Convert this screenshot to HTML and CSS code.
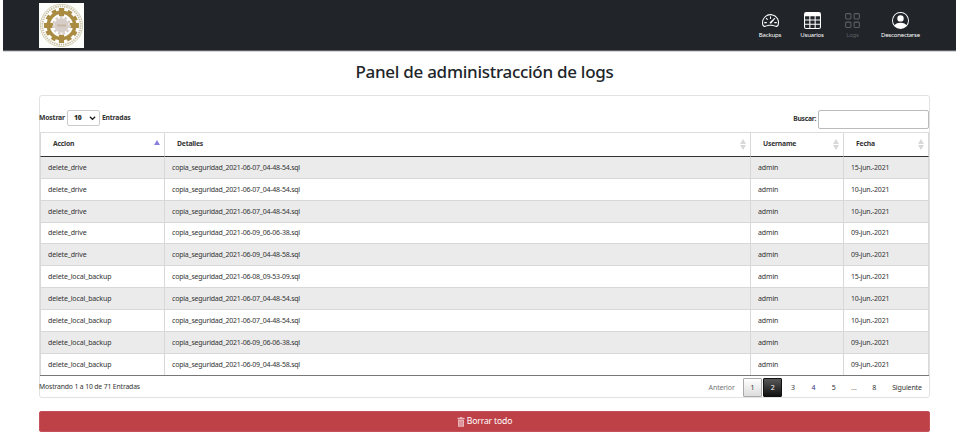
FILE: index.html
```html
<!DOCTYPE html>
<html lang="es">
<head>
<meta charset="utf-8">
<title>Panel de administracción de logs</title>
<link rel="stylesheet" href="styles.css">
</head>
<body>
<header class="navbar">
  <svg class="logo" viewBox="0 0 44 44">
    <rect width="44" height="44" fill="#fdfdfc"/>
    <circle cx="22" cy="22" r="20.6" fill="none" stroke="#c9c2a0" stroke-width=".8"/>
    <circle cx="22" cy="22" r="18.7" fill="none" stroke="#c6bea0" stroke-width="1.800" stroke-dasharray="1.3 .9"/>
    <circle cx="22" cy="22" r="14.8" fill="none" stroke="#a98c42" stroke-width="4" stroke-dasharray="4.2 3.55" stroke-dashoffset="2.1"/>
    <circle cx="22" cy="22" r="12.900" fill="none" stroke="#a98c42" stroke-width="3.400"/>
    <path d="M5 19.500h9v5H5zM30 19.500h9v5h-9zM19.500 5h5v8h-5zM19.500 31h5v8h-5z" fill="#a98c42"/>
    <circle cx="22" cy="22" r="7" fill="#d6cdc8"/>
    <circle cx="22" cy="22" r="8" fill="none" stroke="#d6cdca" stroke-width="2.500" stroke-dasharray="2.500 2"/>
    <path d="M17.500 21h9v2h-9z" fill="#c8b7a4"/>
  </svg>
  <nav class="menu">
    <a class="item backups"><svg viewBox="0 0 16 16"><path d="M8 4a.5.5 0 0 1 .5.5V6a.5.5 0 0 1-1 0V4.500A.5.5 0 0 1 8 4zM3.732 5.732a.5.5 0 0 1 .707 0l.915.914a.5.5 0 1 1-.708.708l-.914-.915a.5.5 0 0 1 0-.707zM2 10a.5.5 0 0 1 .5-.5h1.586a.5.5 0 0 1 0 1H2.500A.5.5 0 0 1 2 10zm9.500 0a.5.5 0 0 1 .5-.5h1.500a.5.5 0 0 1 0 1H12a.5.5 0 0 1-.5-.5zm.754-4.246a.389.389 0 0 0-.527-.02L7.547 9.310a.91.91 0 1 0 1.302 1.258l3.434-4.297a.389.389 0 0 0-.029-.518z"/><path fill-rule="evenodd" d="M0 10a8 8 0 1 1 15.547 2.661c-.442 1.253-1.845 1.602-2.932 1.250C11.309 13.488 9.475 13 8 13c-1.474 0-3.310.488-4.615.911-1.087.352-2.490.003-2.932-1.250A7.988 7.988 0 0 1 0 10zm8-7a7 7 0 0 0-6.603 9.329c.203.575.923.876 1.680.630C4.397 12.533 6.358 12 8 12s3.604.532 4.923.960c.757.245 1.477-.056 1.680-.631A7 7 0 0 0 8 3z"/></svg><span>Backups</span></a>
    <a class="item users"><svg viewBox="0 0 16 16"><path d="M0 2a2 2 0 0 1 2-2h12a2 2 0 0 1 2 2v12a2 2 0 0 1-2 2H2a2 2 0 0 1-2-2V2zm15 2h-4v3h4V4zm0 4h-4v3h4V8zm0 4h-4v3h3a1 1 0 0 0 1-1v-2zm-5 3v-3H6v3h4zm-5 0v-3H1v2a1 1 0 0 0 1 1h3zm-4-4h4V8H1v3zm0-4h4V4H1v3zm5-3v3h4V4H6zm4 4H6v3h4V8z"/></svg><span>Usuarios</span></a>
    <a class="item logs"><svg viewBox="0 0 16 16"><path d="M1 2.500A1.500 1.500 0 0 1 2.500 1h3A1.500 1.500 0 0 1 7 2.500v3A1.500 1.500 0 0 1 5.500 7h-3A1.500 1.500 0 0 1 1 5.500v-3zM2.500 2a.5.5 0 0 0-.5.5v3a.5.5 0 0 0 .5.5h3a.5.5 0 0 0 .5-.5v-3a.5.5 0 0 0-.5-.5h-3zm6.500.5A1.500 1.500 0 0 1 10.500 1h3A1.500 1.500 0 0 1 15 2.500v3A1.500 1.500 0 0 1 13.500 7h-3A1.500 1.500 0 0 1 9 5.500v-3zm1.500-.5a.5.5 0 0 0-.5.5v3a.5.5 0 0 0 .5.5h3a.5.5 0 0 0 .5-.5v-3a.5.5 0 0 0-.5-.5h-3zM1 10.500A1.500 1.500 0 0 1 2.500 9h3A1.500 1.500 0 0 1 7 10.500v3A1.500 1.500 0 0 1 5.500 15h-3A1.500 1.500 0 0 1 1 13.500v-3zm1.500-.5a.5.5 0 0 0-.5.5v3a.5.5 0 0 0 .5.5h3a.5.5 0 0 0 .5-.5v-3a.5.5 0 0 0-.5-.5h-3zm6.500.5A1.500 1.500 0 0 1 10.500 9h3a1.500 1.500 0 0 1 1.500 1.500v3a1.500 1.500 0 0 1-1.500 1.500h-3A1.500 1.500 0 0 1 9 13.500v-3zm1.500-.5a.5.5 0 0 0-.5.5v3a.5.5 0 0 0 .5.5h3a.5.5 0 0 0 .5-.5v-3a.5.5 0 0 0-.5-.5h-3z"/></svg><span>Logs</span></a>
    <a class="item logout"><svg viewBox="0 0 16 16"><path d="M11 6a3 3 0 1 1-6 0 3 3 0 0 1 6 0z"/><path fill-rule="evenodd" d="M0 8a8 8 0 1 1 16 0A8 8 0 0 1 0 8zm8-7a7 7 0 0 0-5.468 11.370C3.242 11.226 4.805 10 8 10s4.757 1.225 5.468 2.370A7 7 0 0 0 8 1z"/></svg><span>Desconectarse</span></a>
  </nav>
</header>
<main class="content">
  <h1>Panel de administracción de logs</h1>
  <section class="card">
    <div class="controls">
      <div class="length">Mostrar <span class="select"><b>10</b><svg viewBox="0 0 8 6"><path d="M1 1.500 4 4.500 7 1.500" fill="none" stroke="#222" stroke-width="1.500"/></svg></span> Entradas</div>
      <label class="search">Buscar:<input type="text"></label>
    </div>
    <div class="table">
      <div class="row head"><div>Accion<i class="sort asc"></i></div><div>Detalles<i class="sort"></i></div><div>Username<i class="sort"></i></div><div>Fecha<i class="sort"></i></div></div>
      <div class="row"><div>delete_drive</div><div>copia_seguridad_2021-06-07_04-48-54.sql</div><div>admin</div><div>15-jun.-2021</div></div>
      <div class="row"><div>delete_drive</div><div>copia_seguridad_2021-06-07_04-48-54.sql</div><div>admin</div><div>10-jun.-2021</div></div>
      <div class="row"><div>delete_drive</div><div>copia_seguridad_2021-06-07_04-48-54.sql</div><div>admin</div><div>10-jun.-2021</div></div>
      <div class="row"><div>delete_drive</div><div>copia_seguridad_2021-06-09_06-06-38.sql</div><div>admin</div><div>09-jun.-2021</div></div>
      <div class="row"><div>delete_drive</div><div>copia_seguridad_2021-06-09_04-48-58.sql</div><div>admin</div><div>09-jun.-2021</div></div>
      <div class="row"><div>delete_local_backup</div><div>copia_seguridad_2021-06-08_09-53-09.sql</div><div>admin</div><div>15-jun.-2021</div></div>
      <div class="row"><div>delete_local_backup</div><div>copia_seguridad_2021-06-07_04-48-54.sql</div><div>admin</div><div>10-jun.-2021</div></div>
      <div class="row"><div>delete_local_backup</div><div>copia_seguridad_2021-06-07_04-48-54.sql</div><div>admin</div><div>10-jun.-2021</div></div>
      <div class="row"><div>delete_local_backup</div><div>copia_seguridad_2021-06-09_06-06-38.sql</div><div>admin</div><div>09-jun.-2021</div></div>
      <div class="row"><div>delete_local_backup</div><div>copia_seguridad_2021-06-09_04-48-58.sql</div><div>admin</div><div>09-jun.-2021</div></div>
    </div>
    <footer class="footer">
      <span class="info">Mostrando 1 a 10 de 71 Entradas</span>
      <div class="pages"><a class="word off">Anterior</a><a class="current">1</a><a class="hover">2</a><a>3</a><a class="blue">4</a><a>5</a><a class="off">…</a><a>8</a><a class="word next">Siguiente</a></div>
    </footer>
  </section>
  <button class="delete"><svg viewBox="0 0 8 10"><path d="M3 0h2v.8h2.500v1.400H.5V.8H3zM1 2.800h6V9.800H1z" fill="#e9b6ba"/><path d="M2.700 3.800v5M4 3.800v5M5.300 3.800v5" stroke="#c9626a" stroke-width=".55"/></svg>Borrar todo</button>
</main>
</body>
</html>
```
FILE: styles.css
```css
* { box-sizing: border-box; }
body {
  margin: 0;
  height: 434px;
  overflow: hidden;
  background: #fff;
  color: #333;
  font: 7px/1 "Noto Sans", "Open Sans", sans-serif;
  letter-spacing: -.13px;
}
.navbar {
  height: 51px;
  margin-left: 3px;
  padding: 3px 27px 0 36px;
  display: flex;
  justify-content: space-between;
  background: #212529;
  border-bottom: 1px solid #5c6064;
  box-shadow: 0 1px 0 #d5d6d8;
}
.logo { width: 45px; height: 45px; }
.menu { display: flex; padding-top: 9px; }
.item {
  display: flex;
  flex-direction: column;
  align-items: center;
  color: #fff;
  font-size: 6px;
  letter-spacing: -.18px;
}
.item svg { width: 17px; height: 17px; fill: currentColor; margin-bottom: 2.500px; }
.backups { width: 42px; }
.users { width: 42px; }
.logs { width: 39px; color: #5c6064; }
.logout { width: 57px; }
.content { padding: 0 26px 0 39px; }
h1 {
  margin: 0;
  height: 44px;
  padding-top: 12px;
  text-align: center;
  font-size: 17px;
  line-height: 18px;
  font-weight: 500;
  letter-spacing: -.28px;
  color: #212529;
}
.card {
  height: 303px;
  border: 1px solid #e2e2e2;
  border-radius: 3px;
}
.controls {
  height: 36px;
  display: flex;
  justify-content: space-between;
  font-size: 6.800px;
  font-weight: 700;
  letter-spacing: -.16px;
}
.length { display: flex; align-items: center; gap: 2px; height: 18px; margin-top: 13px; margin-left: -1px; }
.select {
  width: 33px;
  height: 16px;
  padding: 0 3px 0 6px;
  display: flex;
  align-items: center;
  justify-content: space-between;
  border: 1px solid #ccc;
  border-radius: 2px;
}
.select svg { width: 7px; height: 6px; }
.search { display: flex; align-items: center; gap: 2px; height: 19px; margin-top: 14px; letter-spacing: -.3px; }
.search input { width: 111px; height: 19px; margin: 0; border: 1px solid #bbb; border-radius: 2px; background: #fff; }
.table { border-top: 1px solid #ddd; border-bottom: 1px solid #777; }
.row {
  display: grid;
  grid-template-columns: 124px 586px 93px 86px;
  height: 21.850px;
}
.row > div {
  display: flex;
  align-items: center;
  padding-left: 7px;
  border-left: 1px solid #d8d8d8;
  border-bottom: 1px solid #d8d8d8;
}
.row > div:nth-child(2), .row > div:nth-child(4) { letter-spacing: -.22px; }
.row > div:last-child { border-right: 1px solid #d8d8d8; }
.row:nth-child(even) { background: #ebebeb; }
.row:last-child > div { border-bottom: 0; }
.row.head { height: 24px; font-size: 6.800px; font-weight: 700; }
.row.head > div { justify-content: space-between; padding: 0 4px 0 12px; border-bottom: 1px solid #333; letter-spacing: -.2px; }
.sort { display: flex; flex-direction: column; gap: 1px; }
.sort::before, .sort::after { content: ""; border: 3px solid transparent; }
.sort::before { border-top: 0; border-bottom: 5px solid #d8d8d8; }
.sort::after { border-bottom: 0; border-top: 5px solid #d8d8d8; }
.sort.asc { padding-bottom: 4px; }
.sort.asc::before { border-width: 0 3px 5px; border-bottom-color: #8780dc; }
.sort.asc::after { display: none; }
.footer { display: flex; justify-content: space-between; }
.info { margin: 7.500px 0 0 -1px; font-size: 6.800px; }
.pages { display: flex; gap: 1.300px; margin-top: 2px; }
.pages a {
  width: 19px;
  height: 19px;
  display: flex;
  align-items: center;
  justify-content: center;
  border: 1px solid transparent;
  border-radius: 1px;
}
.pages .word { width: 40px; }
.pages .next { width: 44px; }
.pages .off { color: #777; }
.pages .blue { color: #33337a; }
.pages .current { border-color: #aaa; background: linear-gradient(#fff, #dcdcdc); }
.pages .hover { border-color: #111; color: #fff; background: linear-gradient(#585858, #111); }
.delete {
  width: 100%;
  height: 21px;
  margin: 13px 0 0;
  padding: 0;
  display: flex;
  align-items: center;
  justify-content: center;
  gap: 2px;
  border: 1px solid #c5525a;
  border-radius: 2px;
  background: #bf4148;
  color: #fff;
  font: 8.600px/1 "Noto Sans", sans-serif;
  letter-spacing: -.15px;
}
.delete svg { width: 8px; height: 10px; }
```
